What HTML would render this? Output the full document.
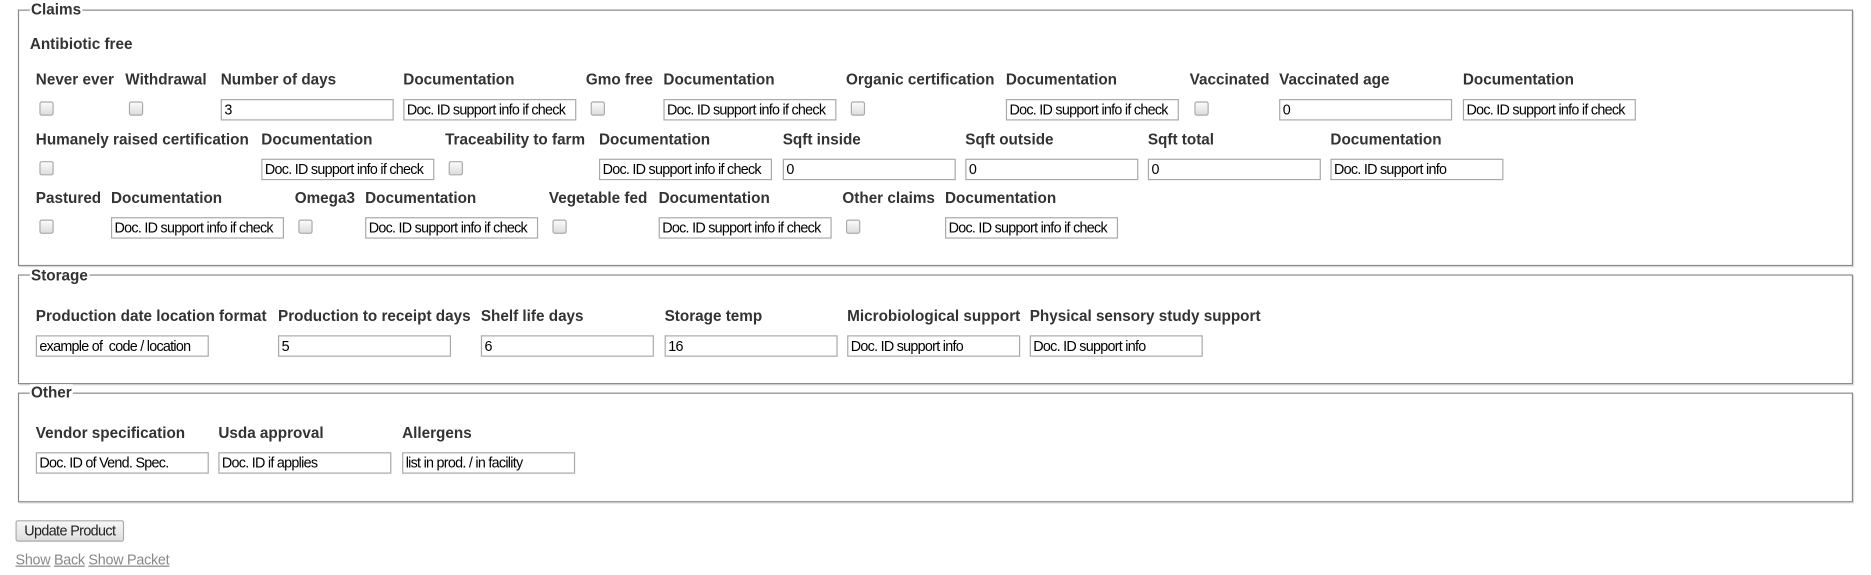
<!DOCTYPE html>
<html><head><meta charset="utf-8"><style>
html,body{margin:0;padding:0;background:#fff;width:1871px;height:575px;overflow:hidden}
#w{position:absolute;left:0;top:0;width:1568px;height:482px;transform:scale(1.1932);transform-origin:0 0;font-family:"Liberation Sans",Arial,sans-serif;color:#222}
.fs{position:absolute;border:1px solid #8a8a8a;box-shadow:inset 1px 1px 0 #fff,1px 1px 0 #e0e0e0}
.lg{position:absolute;background:#fff;padding:0 1px;font-weight:bold;font-size:12.8px;line-height:14px;color:#333}
.l{position:absolute;font-weight:bold;font-size:12.8px;line-height:14px;color:#333;white-space:nowrap}
.i{position:absolute;border:1px solid #a9a9a9;font-size:12px;line-height:16px;padding-left:2px;box-sizing:border-box;width:145px;height:18px;color:#000;white-space:nowrap;overflow:hidden;letter-spacing:-0.6px}
.c{position:absolute;width:10px;height:10px;border:1px solid #aaa;border-radius:2px;background:linear-gradient(#fafafa,#ddd)}
.btn{position:absolute;left:13px;top:436px;width:91px;height:18px;border:1px solid #aaa;background:linear-gradient(#f6f6f6,#dedede);font-size:12px;line-height:17px;text-align:center;box-sizing:border-box;letter-spacing:-0.5px;border-radius:2px}
.lk{position:absolute;top:462px;left:13px;font-size:12px;color:#888;letter-spacing:-0.2px}
.lk u{margin-right:3px}
</style></head><body><div id="w">
<div class="fs" style="left:15px;top:8px;width:1536px;height:213px"></div>
<div class="lg" style="left:25px;top:1px">Claims</div>
<div class="l" style="left:25px;top:30px">Antibiotic free</div>

<div class="l" style="left:30px;top:60px">Never ever</div>
<div class="l" style="left:105px;top:60px">Withdrawal</div>
<div class="l" style="left:185px;top:60px">Number of days</div>
<div class="l" style="left:338px;top:60px">Documentation</div>
<div class="l" style="left:491px;top:60px">Gmo free</div>
<div class="l" style="left:556px;top:60px">Documentation</div>
<div class="l" style="left:709px;top:60px">Organic certification</div>
<div class="l" style="left:843px;top:60px">Documentation</div>
<div class="l" style="left:997px;top:60px">Vaccinated</div>
<div class="l" style="left:1072px;top:60px">Vaccinated age</div>
<div class="l" style="left:1226px;top:60px">Documentation</div>
<div class="c" style="left:33px;top:85px"></div>
<div class="c" style="left:108px;top:85px"></div>
<div class="i" style="left:185px;top:83px">3</div>
<div class="i" style="left:338px;top:83px">Doc. ID support info if check</div>
<div class="c" style="left:495px;top:85px"></div>
<div class="i" style="left:556px;top:83px">Doc. ID support info if check</div>
<div class="c" style="left:713px;top:85px"></div>
<div class="i" style="left:843px;top:83px">Doc. ID support info if check</div>
<div class="c" style="left:1001px;top:85px"></div>
<div class="i" style="left:1072px;top:83px">0</div>
<div class="i" style="left:1226px;top:83px">Doc. ID support info if check</div>

<div class="l" style="left:30px;top:110px">Humanely raised certification</div>
<div class="l" style="left:219px;top:110px">Documentation</div>
<div class="l" style="left:373px;top:110px">Traceability to farm</div>
<div class="l" style="left:502px;top:110px">Documentation</div>
<div class="l" style="left:656px;top:110px">Sqft inside</div>
<div class="l" style="left:809px;top:110px">Sqft outside</div>
<div class="l" style="left:962px;top:110px">Sqft total</div>
<div class="l" style="left:1115px;top:110px">Documentation</div>
<div class="c" style="left:33px;top:135px"></div>
<div class="i" style="left:219px;top:133px">Doc. ID support info if check</div>
<div class="c" style="left:376px;top:135px"></div>
<div class="i" style="left:502px;top:133px">Doc. ID support info if check</div>
<div class="i" style="left:656px;top:133px">0</div>
<div class="i" style="left:809px;top:133px">0</div>
<div class="i" style="left:962px;top:133px">0</div>
<div class="i" style="left:1115px;top:133px">Doc. ID support info</div>

<div class="l" style="left:30px;top:159px">Pastured</div>
<div class="l" style="left:93px;top:159px">Documentation</div>
<div class="l" style="left:247px;top:159px">Omega3</div>
<div class="l" style="left:306px;top:159px">Documentation</div>
<div class="l" style="left:460px;top:159px">Vegetable fed</div>
<div class="l" style="left:552px;top:159px">Documentation</div>
<div class="l" style="left:706px;top:159px">Other claims</div>
<div class="l" style="left:792px;top:159px">Documentation</div>
<div class="c" style="left:33px;top:184px"></div>
<div class="i" style="left:93px;top:182px">Doc. ID support info if check</div>
<div class="c" style="left:250px;top:184px"></div>
<div class="i" style="left:306px;top:182px">Doc. ID support info if check</div>
<div class="c" style="left:463px;top:184px"></div>
<div class="i" style="left:552px;top:182px">Doc. ID support info if check</div>
<div class="c" style="left:709px;top:184px"></div>
<div class="i" style="left:792px;top:182px">Doc. ID support info if check</div>

<div class="fs" style="left:15px;top:230px;width:1536px;height:90px"></div>
<div class="lg" style="left:25px;top:224px">Storage</div>
<div class="l" style="left:30px;top:258px">Production date location format</div>
<div class="l" style="left:233px;top:258px">Production to receipt days</div>
<div class="l" style="left:403px;top:258px">Shelf life days</div>
<div class="l" style="left:557px;top:258px">Storage temp</div>
<div class="l" style="left:710px;top:258px">Microbiological support</div>
<div class="l" style="left:863px;top:258px">Physical sensory study support</div>
<div class="i" style="left:30px;top:281px">example of &nbsp;code / location</div>
<div class="i" style="left:233px;top:281px">5</div>
<div class="i" style="left:403px;top:281px">6</div>
<div class="i" style="left:557px;top:281px">16</div>
<div class="i" style="left:710px;top:281px">Doc. ID support info</div>
<div class="i" style="left:863px;top:281px">Doc. ID support info</div>

<div class="fs" style="left:15px;top:329px;width:1536px;height:90px"></div>
<div class="lg" style="left:25px;top:322px">Other</div>
<div class="l" style="left:30px;top:356px">Vendor specification</div>
<div class="l" style="left:183px;top:356px">Usda approval</div>
<div class="l" style="left:337px;top:356px">Allergens</div>
<div class="i" style="left:30px;top:379px">Doc. ID of Vend. Spec.</div>
<div class="i" style="left:183px;top:379px">Doc. ID if applies</div>
<div class="i" style="left:337px;top:379px">list in prod. / in facility</div>

<div class="btn">Update Product</div>
<div class="lk"><u>Show</u><u>Back</u><u>Show Packet</u></div>
</div></body></html>
